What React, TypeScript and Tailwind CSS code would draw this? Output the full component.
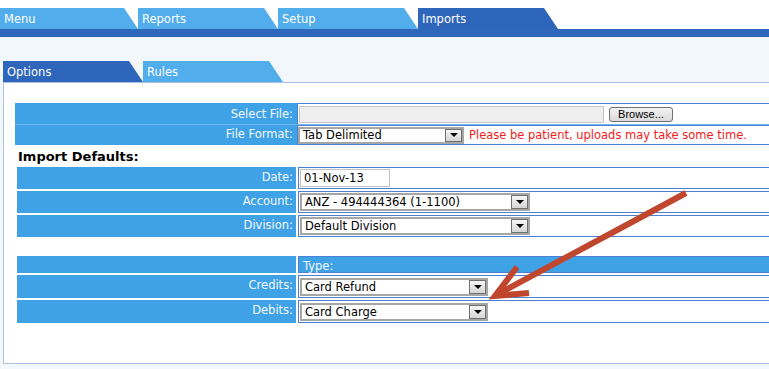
import React from "react";

const tabClip = "[clip-path:polygon(0_0,calc(100%_-_14px)_0,100%_100%,0_100%)]";

function Tab({ label, active, width }: { label: string; active?: boolean; width: number }) {
  return (
    <div
      className={`${tabClip} flex h-full items-center pt-[2px] pl-1 text-white ${active ? "bg-[#2e66bb]" : "bg-[#51adec]"}`}
      style={{ width }}
    >
      {label}
    </div>
  );
}

function Select({ value, width, height }: { value: string; width: number; height: number }) {
  return (
    <div
      className="flex items-stretch border-2 border-[#a6a6a6] bg-white text-black"
      style={{ width, height }}
    >
      <div className="flex flex-1 items-center pt-[2px] pl-[3px] leading-none">{value}</div>
      <div className="flex w-[17px] items-center justify-center border border-[#6f6f6f] bg-gradient-to-b from-[#f6f6f6] to-[#d5d5d5]">
        <div className="h-0 w-0 border-t-[4px] border-r-[4px] border-l-[4px] border-t-black border-r-transparent border-l-transparent" />
      </div>
    </div>
  );
}

function LabelRow({
  label,
  height,
  children,
  header,
}: {
  label: string;
  height: number;
  children?: React.ReactNode;
  header?: boolean;
}) {
  return (
    <div className="flex gap-[2px]" style={{ height }}>
      <div className="flex w-[279px] justify-end bg-[#3fa1e6] pt-[2px] pr-[3px] text-[#f2f8fe]">{label}</div>
      <div
        className={`flex flex-1 border border-[#4d7fd3] ${header ? "items-start bg-[#3fa1e6] pl-1 pt-[1px] text-[#f2f8fe]" : "items-center bg-white pl-[1px]"}`}
      >
        {children}
      </div>
    </div>
  );
}

export default function App() {
  return (
    <div className="relative h-[369px] w-[769px] overflow-hidden bg-white font-['DejaVu_Sans',Verdana,sans-serif] text-[11.5px]">
      <div className="h-2" />
      <div className="flex h-[21px]">
        <Tab label="Menu" width={138} />
        <Tab label="Reports" width={140} />
        <Tab label="Setup" width={140} />
        <Tab label="Imports" width={140} active />
      </div>
      <div className="h-2 bg-[#2f67bb]" />
      <div className="h-[332px] bg-[#f2f7fc] pt-6">
        <div className="flex h-[21px] pl-[3px]">
          <Tab label="Options" width={140} active />
          <Tab label="Rules" width={140} />
        </div>
        <div className="ml-[3px] h-[282px] w-[800px] border-t border-b border-l border-[#a9c2e2] bg-white pt-5 pl-[11px]">
          {/* file section */}
          <div className="w-[780px]">
            <div className="flex h-[21px]">
              <div className="flex w-[282px] items-center justify-end bg-[#3fa1e6] pt-[2px] pr-[4px] text-[#f2f8fe]">Select File:</div>
              <div className="flex flex-1 items-center gap-[5px] border-t border-l border-[#4d7fd3] pl-[1px]">
                <div className="h-[17px] w-[305px] border border-[#c6c6c6] bg-[#efefef]" />
                <button className="flex h-[15px] w-[64px] items-center justify-center rounded-[3px] border border-[#707070] bg-gradient-to-b from-[#f3f3f3] to-[#d9d9d9] font-['Liberation_Sans',Arial,sans-serif] text-[11px] leading-none text-black">
                  Browse...
                </button>
              </div>
            </div>
            <div className="flex h-[21px] border-t border-[#6fb6ec]">
              <div className="flex w-[282px] items-center justify-end bg-[#3fa1e6] pr-[4px] text-[#f2f8fe]">File Format:</div>
              <div className="flex flex-1 items-center gap-[5px] border-t border-b border-l border-[#4d7fd3] pl-0">
                <Select value="Tab Delimited" width={166} height={17} />
                <span className="pt-[1px] text-[#f21a1a]">Please be patient, uploads may take some time.</span>
              </div>
            </div>
          </div>

          <div className="flex h-[22px] items-center pt-[1px] pl-[3px] text-[13px] font-bold text-black">Import Defaults:</div>

          <div className="ml-[2px] flex w-[778px] flex-col gap-[2px]">
            <LabelRow label="Date:" height={22}>
              <div className="flex h-[18px] w-[90px] items-center border border-[#c3c3c3] pt-[1px] pl-[3px] text-black">01-Nov-13</div>
            </LabelRow>
            <LabelRow label="Account:" height={22}>
              <Select value="ANZ - 494444364 (1-1100)" width={230} height={18} />
            </LabelRow>
            <LabelRow label="Division:" height={22}>
              <Select value="Default Division" width={230} height={18} />
            </LabelRow>
            <div className="h-[15px]" />
            <LabelRow label="" height={17} header>
              Type:
            </LabelRow>
            <LabelRow label="Credits:" height={23}>
              <Select value="Card Refund" width={188} height={18} />
            </LabelRow>
            <LabelRow label="Debits:" height={23}>
              <Select value="Card Charge" width={188} height={18} />
            </LabelRow>
          </div>
        </div>
      </div>

      <svg className="pointer-events-none absolute top-0 left-0" width="769" height="369">
        <line x1="686" y1="193" x2="498" y2="294" stroke="#c1462e" strokeWidth="6" />
        <polyline points="517,267 495,296 529,293" fill="none" stroke="#c1462e" strokeWidth="6" strokeLinejoin="miter" />
      </svg>
    </div>
  );
}
